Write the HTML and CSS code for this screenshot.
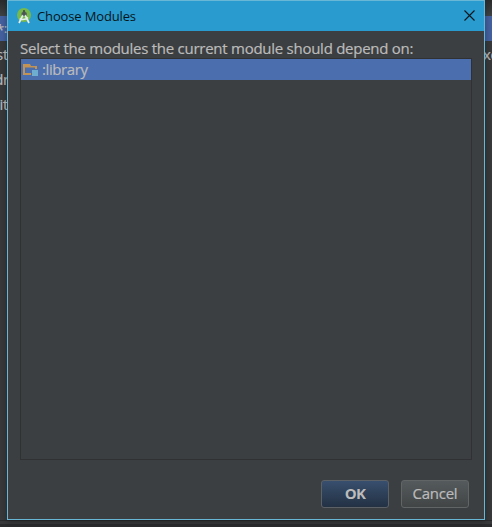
FILE: index.html
```html
<!DOCTYPE html>
<html lang="en">
<head>
<meta charset="utf-8">
<title>Choose Modules</title>
<link rel="stylesheet" href="styles.css">
</head>
<body>
<div class="backdrop">
  <div class="toolbar"></div>
  <div class="row selected"><span class="mark">*<b>:</b></span></div>
  <div class="row"><span>st</span><span>xc</span></div>
  <div class="row"><span class="wide">dr</span></div>
  <div class="row"><span>it</span></div>
  <div class="statusbar"></div>
</div>
<section class="dialog" role="dialog">
  <header class="titlebar">
    <svg class="logo" viewBox="0 0 16 18" width="16" height="18">
      <circle cx="8" cy="8" r="7" fill="#78b94c"/>
      <path d="M5.5 6 8 3.5l2.8 2.5v3H5.5z" fill="#56665a"/>
      <path d="M7 8 3 16M9 8l4 8M3.5 12Q9 13.5 12 10.5" fill="none" stroke="#e4eeee" stroke-width="1.7"/>
      <path d="M7.2 3h1.6v2.5H7.2z" fill="#46514c"/>
      <circle cx="8" cy="7" r="1.8" fill="#4b5652"/>
    </svg>
    <h1 class="title">Choose Modules</h1>
    <svg class="close" viewBox="0 0 11 11" width="11" height="11"><path d="M.5.5l10 10M10.5.5l-10 10" stroke="#07151b" stroke-width="1.1"/></svg>
  </header>
  <main class="content">
    <div class="prompt">Select the modules the current module should depend on:</div>
    <div class="list">
      <div class="item">
        <svg class="folder" viewBox="0 0 16 14" width="16" height="14">
          <path d="M0 1h7l1 2h6v9H0zM2 4.5V10h10V4.5z" fill="#c29352" fill-rule="evenodd"/>
          <path d="M8 6h7v7H8z" fill="#4b6eaf"/>
          <path d="M9 7h6v6H9z" fill="#6eacd0"/>
        </svg>
        <span>:library</span>
      </div>
    </div>
    <footer class="actions">
      <button class="button primary"><span>OK</span></button>
      <button class="button"><span>Cancel</span></button>
    </footer>
  </main>
</section>
</body>
</html>
```
FILE: styles.css
```css
* { box-sizing: border-box; }
body {
  margin: 0;
  width: 492px;
  height: 527px;
  position: relative;
  overflow: hidden;
  font: 500 15px/20px "Open Sans", "Noto Sans", sans-serif;
  letter-spacing: -.26px;
  color: #bbbbbb;
  -webkit-text-stroke: .2px;
}
.backdrop {
  height: 527px;
  display: flex;
  flex-direction: column;
  background: #37393a;
}
.toolbar { height: 16px; background: linear-gradient(#292b2c, #414445); }
.row {
  height: 25px;
  display: flex;
  justify-content: space-between;
  align-items: center;
  white-space: nowrap;
}
.row span {
  width: 8px;
  display: flex;
  justify-content: flex-end;
  overflow: hidden;
}
.row span + span { width: 9px; justify-content: flex-start; }
.row .wide { width: 9px; }
.row .mark { width: 7px; }
.mark b { font-weight: 400; font-size: 12px; }
.selected { background: #4461a0; }
.statusbar {
  height: 7px;
  margin-top: auto;
  border-top: 1px solid #292b2c;
  border-bottom: 3px solid #292b2c;
}
.dialog {
  position: absolute;
  left: 7px;
  top: 0;
  width: 478px;
  height: 520px;
  display: flex;
  flex-direction: column;
  background: #3c3f41;
  border: 1px solid #69b7d6;
  box-shadow: 0 2px 7px rgba(0, 0, 0, .35);
}
.titlebar {
  height: 30px;
  flex: none;
  display: flex;
  align-items: center;
  padding: 0 9px 1px 8px;
  background: #299bce;
}
.title {
  margin: 0 auto 0 5px;
  font: 13px/20px "Open Sans", sans-serif;
  letter-spacing: -.14px;
  color: #07151b;
  -webkit-text-stroke: 0;
}
.content {
  flex: 1;
  display: flex;
  flex-direction: column;
  padding: 7px 12px 12px 12px;
}
.prompt { height: 20px; white-space: nowrap; }
.list { height: 402px; border: 1px solid #2f3133; }
.item {
  height: 21px;
  display: flex;
  align-items: center;
  gap: 3px;
  padding-left: 2px;
  background: #4b6eaf;
}
.item span { margin-top: -2px; letter-spacing: -.4px; }
.actions { display: flex; justify-content: flex-end; gap: 12px; margin-top: 20px; padding-right: 3px; }
.button {
  width: 68px;
  height: 28px;
  padding: 0 0 2px;
  border: 1px solid #616566;
  border-radius: 3px;
  background: linear-gradient(#555a5c, #414546);
  font: inherit;
  letter-spacing: inherit;
  color: inherit;
}
.primary {
  border-color: #5b6167;
  background: linear-gradient(#384f6e, #233143);
  font-weight: 700;
  letter-spacing: -.7px;
  -webkit-text-stroke: 0;
}
```
